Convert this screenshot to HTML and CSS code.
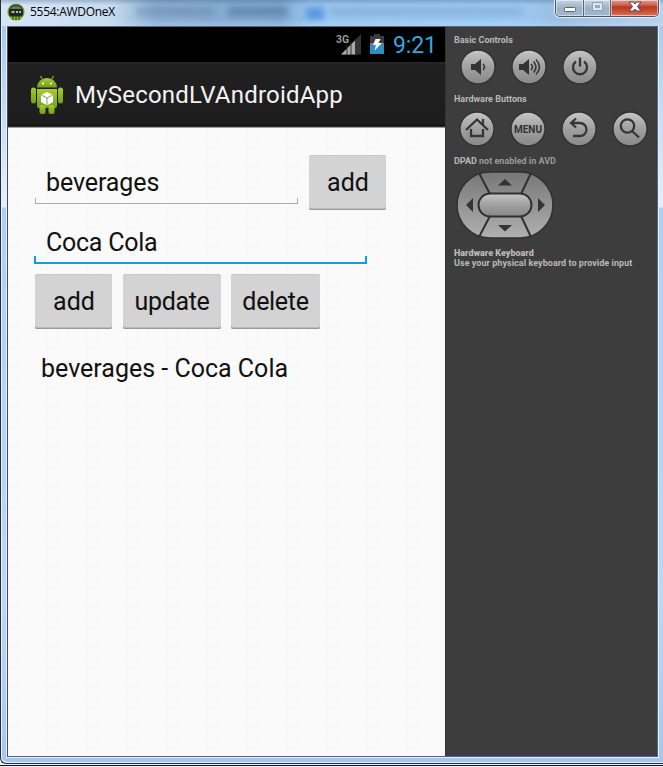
FILE: index.html
```html
<!DOCTYPE html>
<html lang="en">
<head>
<meta charset="utf-8">
<title>5554:AWDOneX</title>
<link rel="stylesheet" href="styles.css">
</head>
<body>
<svg class="defs" width="0" height="0">
  <defs>
    <linearGradient id="metal" x1="0" y1="0" x2="0" y2="1"><stop offset="0" stop-color="#c6c6c6"/><stop offset=".5" stop-color="#a0a0a0"/><stop offset="1" stop-color="#888"/></linearGradient>
    <linearGradient id="pad" x1="0" y1="0" x2="0" y2="1"><stop offset="0" stop-color="#777"/><stop offset="1" stop-color="#b0b0b0"/></linearGradient>
    <linearGradient id="green" x1="0" y1="0" x2="0" y2="1"><stop offset="0" stop-color="#a9cc2d"/><stop offset="1" stop-color="#739d20"/></linearGradient>
  </defs>
</svg>
<div class="window">
  <header class="titlebar">
    <svg class="title-icon" width="18" height="18" viewBox="0 0 18 18"><circle cx="9" cy="9" r="8" fill="#20271f" stroke="#78a32d" stroke-width="1.2"/><path d="M3 6a7 7 0 0 1 12 0z" fill="#69736c"/><path d="M3 13.500h12a7 7 0 0 1-12 0z" fill="#8fc42f"/><path d="M6 13v4M9 13v4M12 13v4" stroke="#1d3510"/><path d="M4.500 9h3M9 9h2M12 9h2" stroke="#e5e5e5" stroke-width="1.4"/></svg>
    <span class="title">5554:AWDOneX</span>
    <i class="ghost g1"></i><i class="ghost g2"></i><i class="ghost g3"></i><i class="ghost g4"></i>
    <div class="controls">
      <div class="ctl min"><svg width="27" height="16"><rect x="8.500" y="7.500" width="11" height="4" rx="1" fill="#fff" stroke="#596576"/></svg></div>
      <div class="ctl max"><svg width="27" height="16"><path d="M8.500 2.500h10v8h-10zM11.500 5.500v2h4v-2z" fill="#dce6ef" fill-rule="evenodd" stroke="#8fa3b8"/></svg></div>
      <div class="ctl close"><svg width="47" height="16"><path d="M18 2h4.500l1.500 2L25.500 2H30l-3.500 4.500L30 11h-4.500L24 9l-1.500 2H18l3.500-4.500z" fill="#fff" stroke="#5c4250"/></svg></div>
    </div>
  </header>
  <main class="client">
    <section class="phone">
      <div class="statusbar">
        <svg width="60" height="26" viewBox="0 0 60 26"><text class="net" x="0" y="9.500" textLength="13" lengthAdjust="spacingAndGlyphs">3G</text><path d="M5 21.500 25 1V21.500z" fill="#343434"/><path d="M5 21.500 20 6.500V21.500z" fill="#aaa"/><path d="M11 12v10M15 9v13M19.500 6v16" stroke="#333"/><path d="M34 3h4V1h6v2h4v7H34z" fill="#3b3b3b"/><path d="M34 10h14v11H34z" fill="#2c91bd"/><path d="M39.500 6h5l-2 4h3.500L38.500 17.500l1.500-5.500h-3z" fill="#fff"/></svg>
        <span class="clock">9:21</span>
      </div>
      <div class="actionbar">
        <svg width="34" height="42" viewBox="0 0 34 42"><g fill="url(#green)"><path d="M7 12.500a10 9.500 0 0 1 20 0z"/><path d="M10.500 1 13 5.500M23.500 1 21 5.500" stroke="#8cae2b" stroke-width="1.200"/><path d="M7 14h20v17a2 2 0 0 1-2 2H9a2 2 0 0 1-2-2z"/><rect x="1" y="12.500" width="5" height="16" rx="2.500"/><rect x="28" y="12.500" width="5" height="16" rx="2.500"/><rect x="9.500" y="30" width="6" height="9" rx="2"/><rect x="18.500" y="30" width="6" height="9" rx="2"/></g><circle cx="13" cy="8.500" r="1" fill="#fff"/><circle cx="21" cy="8.500" r="1" fill="#fff"/><path d="m17 17 6 3v7l-6 3.500-6-3.500v-7z" fill="#fff"/><path d="m11.500 20 5.500 3 5.500-3M17 23v7" fill="none" stroke="#9db17a" stroke-width="1.200"/></svg>
        <span class="app-title">MySecondLVAndroidApp</span>
      </div>
      <div class="form">
        <div class="row first"><div class="field"><span>beverages</span></div><div class="btn add"><span>add</span></div></div>
        <div class="field focus"><span>Coca Cola</span></div>
        <div class="row actions"><div class="btn add"><span>add</span></div><div class="btn update"><span>update</span></div><div class="btn delete"><span>delete</span></div></div>
        <div class="item"><span>beverages - Coca Cola</span></div>
      </div>
    </section>
    <aside class="panel">
      <h2>Basic Controls</h2>
      <div class="keys basic">
        <svg viewBox="0 0 36 36"><circle class="key" cx="18" cy="18" r="17"/><path class="ink" d="M11 15h4l6-5v16l-6-5h-4z"/><path class="line" d="M23 15q3 3 0 6"/></svg>
        <svg viewBox="0 0 36 36"><circle class="key" cx="18" cy="18" r="17"/><path class="ink" d="M8 15h4l6-5v16l-6-5H8z"/><path class="line" d="M20 15q3 3 0 6M22.500 12.500q5 5.500 0 11M25 10.500q7 7.500 0 15"/></svg>
        <svg viewBox="0 0 36 36"><circle class="key" cx="18" cy="18" r="17"/><path class="line thick" d="M14 12.500a7 7 0 1 0 8 0M18 8.500v9"/></svg>
      </div>
      <h2>Hardware Buttons</h2>
      <div class="keys hardware">
        <svg viewBox="0 0 36 36"><circle class="key" cx="18" cy="18" r="17"/><path class="line thick" d="M7 19 18 8.500 29 19M24 14V8M12 18v7h12v-7"/></svg>
        <svg viewBox="0 0 36 36"><circle class="key" cx="18" cy="18" r="17"/><text class="menu" x="4" y="22.300" textLength="28" lengthAdjust="spacingAndGlyphs">MENU</text></svg>
        <svg viewBox="0 0 36 36"><circle class="key" cx="18" cy="18" r="17"/><path class="line thick" d="M15 7.500 10 12l5 4.500M10 12h9a6.500 6.500 0 0 1 0 13h-7"/></svg>
        <svg viewBox="0 0 36 36"><circle class="key" cx="18" cy="18" r="17"/><circle class="line thick" cx="15.500" cy="15" r="6.700"/><path class="line thick" d="m20 20 7 6.500"/></svg>
      </div>
      <h2 class="dpad-title">DPAD <span>not enabled in AVD</span></h2>
      <svg class="dpad" width="98" height="68" viewBox="0 0 98 68"><rect x="1" y="1" width="96" height="66" rx="33" fill="url(#pad)" stroke="#303030" stroke-width="1.500"/><path d="M23 2 34 23M75 2 65 23M23 66l11-21M75 66 65 45" stroke="#303030" stroke-width="2"/><rect x="22.500" y="22.500" width="53" height="23" rx="11.500" fill="url(#metal)" stroke="#303030" stroke-width="2"/><path d="M42 14.500 49 8l7 6.500zM42 54h14l-7 6.500zM17 27v14l-7-7zM82 27v14l7-7z" fill="#333"/></svg>
      <p><b>Hardware Keyboard</b></p>
      <p class="hint">Use your physical keyboard to provide input</p>
    </aside>
  </main>
</div>
<i class="edge"></i>
</body>
</html>
```

FILE: styles.css
```css
* { box-sizing: border-box; }
body { margin: 0; width: 663px; height: 767px; overflow: hidden; background: #edf2fa; font-family: Roboto, "Liberation Sans", sans-serif; }
svg { display: block; flex: none; }
.defs { position: absolute; }
.window { height: 764px; padding: 0 4px 7px 6px; border: solid #252c36; border-width: 0 0 1px 1px; border-bottom-left-radius: 6px; background: linear-gradient(#91b9dc 0, #a8cbed 26px, #bed8f3 90px, #e2effc 200px, #e2effc 207px, #acd0f5 208px, #bad8f8 600px, #a6c6ed); box-shadow: inset 1px -1px #e5f1ff; }
.titlebar { position: relative; display: flex; align-items: flex-start; height: 26px; margin: 0 -4px 0 -6px; padding: 3px 4px 0 6px; background: linear-gradient(90deg, #d7e6f5, #c6dbef 110px, #8dafd2 155px, #81a8d0 280px, #9ac7ef 310px, #9cc9f2 520px, #9bbde1 560px, #b8d1eb); }
.titlebar::after { content: ""; position: absolute; inset: 0; background: linear-gradient(#34567b50, transparent 5px, transparent 19px, #cce4ff50); }
.title-icon { position: relative; z-index: 1; }
.title { position: relative; z-index: 1; margin: 1px 0 0 5px; font: 12px/15px "Open Sans", "Noto Sans", sans-serif; letter-spacing: -.28px; color: #000; }
.ghost { position: absolute; top: 7px; height: 9px; background: #365b8580; filter: blur(3px); }
.g1 { left: 135px; width: 78px; opacity: .5; }
.g2 { left: 227px; width: 60px; opacity: .8; }
.g3 { left: 305px; width: 18px; background: #5b98df; height: 13px; }
.g4 { left: 329px; width: 193px; opacity: .35; }
.controls { position: absolute; z-index: 2; right: 4px; top: 0; display: flex; width: 104px; height: 17px; border: 1px solid #48566a; border-top: 0; border-radius: 0 0 5px 5px; overflow: hidden; box-shadow: 0 0 1px 1px #e6f1fb; }
.ctl { height: 16px; overflow: hidden; box-shadow: inset 0 0 0 1px #ffffff80; }
.min, .max { width: 28px; border-right: 1px solid #58677a; background: linear-gradient(#c5d4e3, #9cb1c7 8px, #9fb7cf); }
.max { width: 27px; }
.close { flex: 1; background: linear-gradient(#dc9c8b, #c96554 5px, #b93620 7px, #d36343 14px, #e18869); }
.client { display: flex; width: 651px; height: 731px; border: 1px solid; border-color: #53667a #59677a #53637a #3f4e60; background: #fafafa; box-shadow: 0 0 0 1px #e4f0fd; }
.phone { width: 437px; background: #fafafa; }
.statusbar { display: flex; height: 35px; padding: 6px 0 0 328px; background: #000; }
.net { font: bold 11px Roboto, sans-serif; fill: #9a9a9a; }
.clock { margin-left: -3px; font-size: 23px; line-height: 25px; letter-spacing: -.15px; color: #32aadc; }
.actionbar { display: flex; height: 66px; padding: 13px 0 0 22px; background: linear-gradient(#2b2b2b, #202020 2px, #1d1d1d 62px, #0b0b0b 64px, #555 65px, #ddd); }
.app-title { margin: 5px 0 0 11px; font-size: 24px; line-height: 31px; letter-spacing: .22px; color: #f3f3f3; white-space: nowrap; }
.form { height: 628px; padding: 27px 0 0 26px; font-size: 25px; color: #111; background: repeating-linear-gradient(90deg, transparent 0 9px, #f8f8f8 9px 10px), repeating-linear-gradient(transparent 0 9px, #f8f8f8 9px 10px); }
.row { display: flex; gap: 10px; }
.first { padding-left: 1px; }
.first .btn { margin-left: 1px; }
.field { position: relative; width: 263px; height: 49px; padding: 13px 0 0 11px; line-height: 30px; letter-spacing: -.1px; }
.field::after { content: ""; position: absolute; inset: auto 0 0; height: 5px; border: solid #aaa; border-width: 0 1px 1px; }
.focus { width: 333px; height: 54px; padding: 18px 0 0 12px; margin-bottom: -1px; letter-spacing: -.25px; }
.focus::after { height: 6px; border-color: #179dd0; border-width: 0 2px 2px; }
.actions { padding: 11px 0 0 1px; }
.btn { height: 55px; padding-top: 13px; border-radius: 2px; background: #d3d3d3; line-height: 30px; text-align: center; white-space: nowrap; box-shadow: inset 0 1px #c9c9c9, inset 0 -1px #999, inset 0 -2px #bbb; }
.add { width: 77px; padding-left: 1px; }
.update { width: 98px; margin-left: 1px; letter-spacing: -.3px; }
.delete { width: 89px; letter-spacing: -.3px; }
.item { padding: 25px 0 0 7px; line-height: 30px; }
.panel { flex: 1; padding: 8px 0 0 8px; background: #3d3d3d; border-left: 1px solid #333; color: #b8b8b8; font-size: 9px; }
h2, p { margin: 0; font-size: 9px; line-height: 11px; font-weight: bold; white-space: nowrap; }
.keys { display: flex; gap: 15px; padding-left: 5px; }
.keys svg { width: 36px; height: 36px; }
.basic { height: 48px; padding: 3px 0 0 6px; }
.hardware { height: 51px; padding-top: 6px; }
.key { fill: url(#metal); stroke: #303030; stroke-width: 1.3; }
.ink { fill: #333; }
.line { fill: none; stroke: #363636; stroke-width: 1.5; }
.thick { stroke-width: 2.3; }
.menu { font: bold 11px Roboto, sans-serif; fill: #333; }
.dpad-title span { color: #999; }
.dpad { margin: 4px 0 9px 2px; }
p { line-height: 10px; }
.hint { letter-spacing: .05px; }
.edge { display: block; margin-top: 1px; height: 1px; background: #101722; }
```
